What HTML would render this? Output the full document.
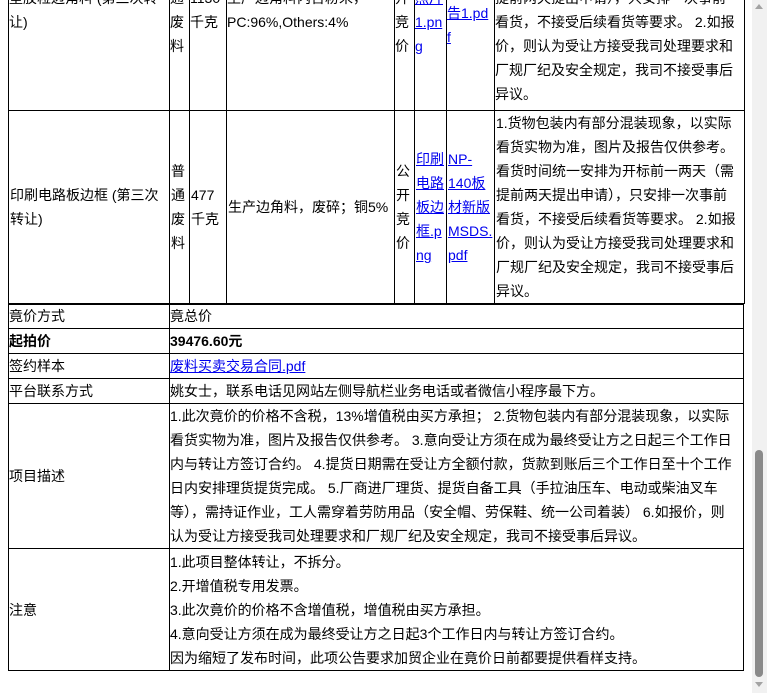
<!DOCTYPE html>
<html><head><meta charset="utf-8"><style>
html,body{margin:0;padding:0;width:767px;height:693px;overflow:hidden;background:#fff;}
body{font-family:"Liberation Sans","Noto Sans CJK SC",sans-serif;font-size:14px;color:#000;position:relative;}
.c{position:absolute;box-sizing:border-box;border:1px solid #000;}
.t{position:absolute;white-space:nowrap;line-height:24px;}
a{color:#00e;text-decoration:underline;}
.v{display:flex;flex-direction:column;justify-content:center;line-height:24px;white-space:nowrap;padding-left:1px;}
</style></head><body>
<!-- top table row1 -->
<div class="c" style="left:8px;top:-100px;width:162px;height:211px"></div>
<div class="c" style="left:169px;top:-100px;width:21px;height:211px"></div>
<div class="c" style="left:189px;top:-100px;width:38px;height:211px"></div>
<div class="c" style="left:226px;top:-100px;width:169px;height:211px"></div>
<div class="c" style="left:394px;top:-100px;width:21px;height:211px"></div>
<div class="c" style="left:414px;top:-100px;width:33px;height:211px"></div>
<div class="c" style="left:446px;top:-100px;width:49px;height:211px"></div>
<div class="c" style="left:494px;top:-100px;width:251px;height:211px"></div>
<div class="t" style="left:9px;top:-14px">塑胶粒边角料 (第三次转<br>让)</div>
<div class="t" style="left:170px;top:-14px">通<br>废<br>料</div>
<div class="t" style="left:190px;top:-14px">1130<br>千克</div>
<div class="t" style="left:227px;top:-14px">生产边角料内含粉末，<br>PC:96%,Others:4%</div>
<div class="t" style="left:395px;top:-14px">开<br>竞<br>价</div>
<div class="t" style="left:415px;top:-14px"><a>照片</a><br><a>1.pn</a><br><a>g</a></div>
<div class="t" style="left:447px;top:1px"><a>告1.pd</a><br><a>f</a></div>
<div class="t" style="left:495px;top:-14px">提前两天提出申请），只安排一次事前<br>看货，不接受后续看货等要求。 2.如报<br>价，则认为受让方接受我司处理要求和<br>厂规厂纪及安全规定，我司不接受事后<br>异议。</div>
<!-- row2 -->
<div class="c v" style="left:8px;top:110px;width:162px;height:194px">印刷电路板边框 (第三次<br>转让)</div>
<div class="c v" style="left:169px;top:110px;width:21px;height:194px">普<br>通<br>废<br>料</div>
<div class="c v" style="left:189px;top:110px;width:38px;height:194px">477<br>千克</div>
<div class="c v" style="left:226px;top:110px;width:169px;height:194px">生产边角料，废碎；铜5%</div>
<div class="c v" style="left:394px;top:110px;width:21px;height:194px">公<br>开<br>竞<br>价</div>
<div class="c v" style="left:414px;top:110px;width:33px;height:194px"><a>印刷</a><a>电路</a><a>板边</a><a>框.p</a><a>ng</a></div>
<div class="c v" style="left:446px;top:110px;width:49px;height:194px"><a>NP-</a><a>140板</a><a>材新版</a><a>MSDS.</a><a>pdf</a></div>
<div class="c v" style="left:494px;top:110px;width:251px;height:194px">1.货物包装内有部分混装现象，以实际<br>看货实物为准，图片及报告仅供参考。<br>看货时间统一安排为开标前一两天（需<br>提前两天提出申请），只安排一次事前<br>看货，不接受后续看货等要求。 2.如报<br>价，则认为受让方接受我司处理要求和<br>厂规厂纪及安全规定，我司不接受事后<br>异议。</div>
<!-- lower table -->
<div class="c" style="left:8px;top:303px;width:736px;height:368px;border-width:2px 1px 1px 1px"></div>
<div class="c v" style="left:8px;top:304px;width:162px;height:25px;border-width:0 1px 1px 0">竟价方式</div>
<div class="c v" style="left:169px;top:304px;width:575px;height:25px;border-width:0 1px 1px 0">竟总价</div>
<div class="c v" style="left:8px;top:328px;width:162px;height:26px;border-width:0 1px 1px 0;font-weight:bold">起拍价</div>
<div class="c v" style="left:169px;top:328px;width:575px;height:26px;border-width:0 1px 1px 0;font-weight:bold">39476.60元</div>
<div class="c v" style="left:8px;top:353px;width:162px;height:26px;border-width:0 1px 1px 0">签约样本</div>
<div class="c v" style="left:169px;top:353px;width:575px;height:26px;border-width:0 1px 1px 0"><a>废料买卖交易合同.pdf</a></div>
<div class="c v" style="left:8px;top:378px;width:162px;height:26px;border-width:0 1px 1px 0">平台联系方式</div>
<div class="c v" style="left:169px;top:378px;width:575px;height:26px;border-width:0 1px 1px 0">姚女士，联系电话见网站左侧导航栏业务电话或者微信小程序最下方。</div>
<div class="c v" style="left:8px;top:403px;width:162px;height:146px;border-width:0 1px 1px 0">项目描述</div>
<div class="c v" style="left:169px;top:403px;width:575px;height:146px;border-width:0 1px 1px 0">1.此次竟价的价格不含税，13%增值税由买方承担； 2.货物包装内有部分混装现象，以实际<br>看货实物为准，图片及报告仅供参考。 3.意向受让方须在成为最终受让方之日起三个工作日<br>内与转让方签订合约。 4.提货日期需在受让方全额付款，货款到账后三个工作日至十个工作<br>日内安排理货提货完成。 5.厂商进厂理货、提货自备工具（手拉油压车、电动或柴油叉车<br>等），需持证作业，工人需穿着劳防用品（安全帽、劳保鞋、统一公司着装） 6.如报价，则<br>认为受让方接受我司处理要求和厂规厂纪及安全规定，我司不接受事后异议。</div>
<div class="c v" style="left:8px;top:548px;width:162px;height:123px;border-width:0 1px 0 0">注意</div>
<div class="c v" style="left:169px;top:548px;width:575px;height:123px;border-width:0 1px 0 0">1.此项目整体转让，不拆分。<br>2.开增值税专用发票。<br>3.此次竟价的价格不含增值税，增值税由买方承担。<br>4.意向受让方须在成为最终受让方之日起3个工作日内与转让方签订合约。<br>因为缩短了发布时间，此项公告要求加贸企业在竟价日前都要提供看样支持。</div>
<!-- scrollbar -->
<div style="position:absolute;left:752px;top:0;width:15px;height:693px;background:#f1f1f1"></div>
<div style="position:absolute;left:755px;top:450px;width:8px;height:227px;background:#8a8a8a;border-radius:4px"></div>
<div style="position:absolute;left:755px;top:4px;width:0;height:0;border-left:4px solid transparent;border-right:4px solid transparent;border-bottom:5px solid #a3a3a3"></div>
<div style="position:absolute;left:755px;top:682px;width:0;height:0;border-left:4px solid transparent;border-right:4px solid transparent;border-top:5px solid #a3a3a3"></div>
</body></html>
